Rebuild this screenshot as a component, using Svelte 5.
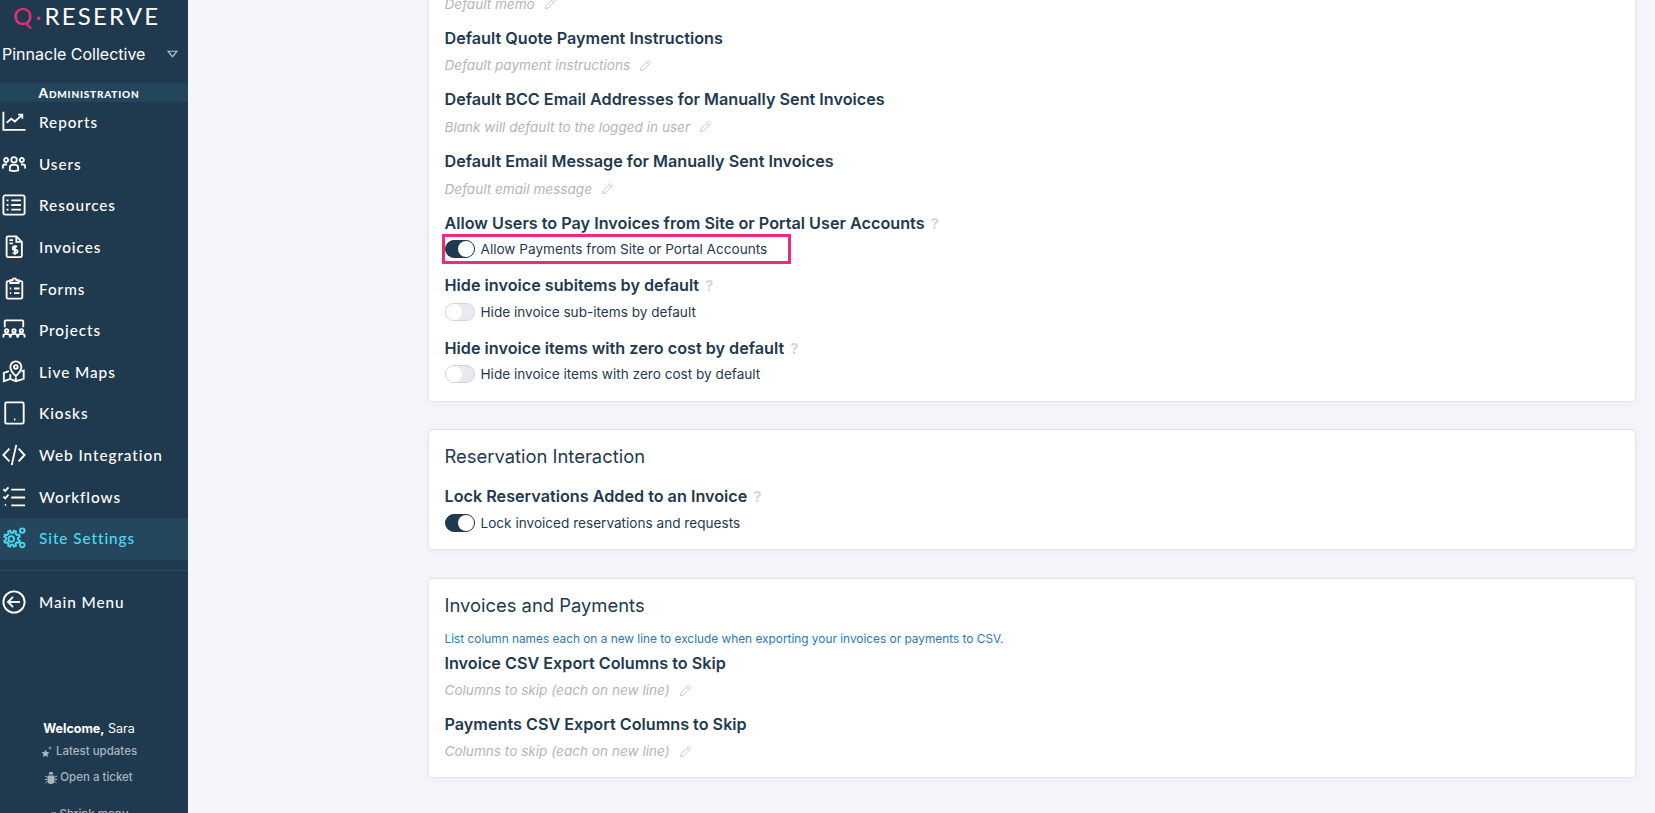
<script>
  const nav = [
    { label: "Reports", icon: "reports" },
    { label: "Users", icon: "users" },
    { label: "Resources", icon: "resources" },
    { label: "Invoices", icon: "invoices" },
    { label: "Forms", icon: "forms" },
    { label: "Projects", icon: "projects" },
    { label: "Live Maps", icon: "maps" },
    { label: "Kiosks", icon: "kiosks" },
    { label: "Web Integration", icon: "code" },
    { label: "Workflows", icon: "workflows" },
    { label: "Site Settings", icon: "settings", active: true },
  ];

  const icons = {
    reports: ["M1.500 2v19.500h24", "M5 14l5-4.500 4 3 7.500-7", "M17.500 5h4.500v4.500"],
    users: [
      "M13 5.500a3 3 0 1 1 0 6a3 3 0 1 1 0-6z",
      "M8.500 20v-3q0-3 3-3h3q3 0 3 3v3q-4.500 1.500-9 0z",
      "M4.500 6.500a2.200 2.200 0 1 1 0 4.400a2.200 2.200 0 1 1 0-4.400z",
      "M21.500 6.500a2.200 2.200 0 1 1 0 4.400a2.200 2.200 0 1 1 0-4.400z",
      "M1 18v-2.500q0-2 2-2h2.500",
      "M25 18v-2.500q0-2-2-2h-2.500",
    ],
    resources: [
      "M3.500 2.500h19a2 2 0 0 1 2 2v17a2 2 0 0 1-2 2h-19a2 2 0 0 1-2-2v-17a2 2 0 0 1 2-2z",
      "M10 8h10.500M10 13h10.500M10 18h10.500",
      "M5 8h2M5 13h2M5 18h2",
    ],
    invoices: [
      "M6.500 1.500h9l6 6v15a1.500 1.500 0 0 1-1.500 1.500h-13.500a1.500 1.500 0 0 1-1.500-1.500v-19.500a1.500 1.500 0 0 1 1.500-1.500z",
      "M15.500 1.500v6h6",
      "M8 5.500h4M8 9h4",
      "M16.500 12.500h-3a1.800 1.800 0 0 0 0 3.600h1.500a1.800 1.800 0 0 1 0 3.600h-3.500M14 11v10.500",
    ],
    forms: [
      "M9 4.500h-2.500a1.500 1.500 0 0 0-1.500 1.500v16a1.500 1.500 0 0 0 1.500 1.500h14a1.500 1.500 0 0 0 1.500-1.500v-16a1.500 1.500 0 0 0-1.500-1.500H18",
      "M9 3.500h2.500a2 2 0 0 1 4 0H18v3H9z",
      "M13 12.500h6M13 17.500h6M8.500 12.500h1.500M8.500 17.500h1.500",
    ],
    projects: [
      "M3 10V3.500a1 1 0 0 1 1-1h18a1 1 0 0 1 1 1V10",
      "M5 12a1.800 1.800 0 1 1 0 3.600a1.800 1.800 0 1 1 0-3.600z",
      "M13 12a1.800 1.800 0 1 1 0 3.600a1.800 1.800 0 1 1 0-3.600z",
      "M21 12a1.800 1.800 0 1 1 0 3.600a1.800 1.800 0 1 1 0-3.600z",
      "M1.500 21v-1.500q0-2 2-2h3q2 0 2 2V21",
      "M9.500 21v-1.500q0-2 2-2h3q2 0 2 2V21",
      "M17.500 21v-1.500q0-2 2-2h3q2 0 2 2V21",
    ],
    maps: [
      "M15 1.500a6 6 0 0 1 6 6c0 4-6 10-6 10s-6-6-6-10a6 6 0 0 1 6-6z",
      "M15 5.500a2 2 0 1 1 0 4a2 2 0 1 1 0-4z",
      "M7.500 12l-5.500 2v9l7-2.500 6 2.500 8.500-2.500v-9l-2.500 .8",
      "M9 20.500v-5M15 23v-4",
    ],
    kiosks: [
      "M5 1.500h17a1.500 1.500 0 0 1 1.500 1.500v20a1.500 1.500 0 0 1-1.500 1.500h-17a1.500 1.500 0 0 1-1.500-1.500V3a1.500 1.500 0 0 1 1.500-1.500z",
      "M13 20h1.500",
    ],
    code: ["M8 6l-6.500 7 6.500 7", "M18 6l6.500 7-6.500 7", "M15.500 2l-5 22"],
    workflows: [
      "M10 5h15M10 13.500h15M10 22h15",
      "M1.500 4.500l2 2 3.500-4",
      "M1.500 12.500l2 2 3.500-4",
      "M3 21.500h1.500",
    ],
    settings: [
      "M10 7l2 .2 1-2.200 2.200 1-.5 2.300 1.500 1.500 2.300-.5.800 2.200-2 1.200v2l2 1.200-.8 2.200-2.300-.5-1.500 1.500.5 2.300-2.200 1-1-2.200h-2.200l-1 2.200-2.200-1 .5-2.300-1.500-1.500-2.300.5-.8-2.200 2-1.200v-2l-2-1.200.8-2.200 2.300.5 1.500-1.500-.5-2.300 2.200-1 1 2.200z",
      "M10 11a3 3 0 1 1 0 6a3 3 0 1 1 0-6z",
      "M22 2.500a2.500 2.500 0 1 1 0 5a2.500 2.500 0 1 1 0-5z",
      "M22 18a2.500 2.500 0 1 1 0 5a2.500 2.500 0 1 1 0-5z",
    ],
    back: [
      "M13 1.500a11.500 11.500 0 1 1 0 23a11.500 11.500 0 1 1 0-23z",
      "M19.500 13H7",
      "M12 7.500L6.500 13l5.500 5.500",
    ],
  };
</script>

{#snippet navIcon(name)}
  <svg class="nav-icon" viewBox="0 0 26 26">
    {#each icons[name] as d}
      <path {d} />
    {/each}
  </svg>
{/snippet}

{#snippet pencil()}
  <svg class="pencil" viewBox="0 0 14 14">
    <path d="M1.500 12.500l.7-3.200 7-7a1.300 1.300 0 0 1 1.900 0l.6.6a1.300 1.300 0 0 1 0 1.900l-7 7z" />
    <path d="M8 3.500l2.500 2.500" />
  </svg>
{/snippet}

{#snippet textField(label, placeholder)}
  <div class="field">
    <div class="label">{label}</div>
    <div class="placeholder">{placeholder}{@render pencil()}</div>
  </div>
{/snippet}

{#snippet toggleField(label, text, on, marked)}
  <div class="field toggle-field">
    <div class="label">{label}<span class="help">?</span></div>
    <div class="toggle-row" class:marked>
      <span class="toggle" class:on><span class="knob"></span></span>
      <span>{text}</span>
    </div>
  </div>
{/snippet}

<div class="layout">
  <aside class="sidebar">
    <div class="logo"><span class="q">Q</span><span class="dot">·</span>RESERVE</div>
    <div class="org">
      <span>Pinnacle Collective</span>
      <svg class="caret" viewBox="0 0 12 8"><path d="M1 1h10L6 7z" /></svg>
    </div>
    <div class="section">Administration</div>
    <nav>
      {#each nav as item}
        <div class="nav-item" class:active={item.active}>
          {@render navIcon(item.icon)}
          <span>{item.label}</span>
        </div>
      {/each}
    </nav>
    <div class="divider"></div>
    <div class="nav-item">
      {@render navIcon("back")}
      <span>Main Menu</span>
    </div>
    <div class="foot">
      <div class="welcome"><b>Welcome,</b> Sara</div>
      <div class="foot-link updates">
        <svg viewBox="0 0 12 12"><path d="M4.500 3.500l1.200 2.500 2.800.3-2 1.900.5 2.800-2.500-1.300-2.500 1.300.5-2.800-2-1.900 2.800-.3z" /><path d="M9 0l.5 1.500 1.500.5-1.500.5L9 4l-.5-1.500L7 2l1.500-.5z" /></svg>
        Latest updates
      </div>
      <div class="foot-link ticket">
        <svg viewBox="0 0 12 12"><path d="M4 1.500a2 2 0 0 1 4 0v1H4zM3.500 3.500h5a1 1 0 0 1 1 1V9a3.500 3 0 0 1-7 0V4.500a1 1 0 0 1 1-1z" /><path class="legs" d="M0 4l2.500 1.500M12 4L9.500 5.500M0 7.500h2.500M12 7.500H9.500M.5 11l2-1.500M11.500 11l-2-1.500" /></svg>
        Open a ticket
      </div>
      <div class="foot-link shrink">« Shrink menu</div>
    </div>
  </aside>

  <main>
    <section class="card first">
      {@render textField("Default Memo", "Default memo")}
      {@render textField("Default Quote Payment Instructions", "Default payment instructions")}
      {@render textField("Default BCC Email Addresses for Manually Sent Invoices", "Blank will default to the logged in user")}
      {@render textField("Default Email Message for Manually Sent Invoices", "Default email message")}
      {@render toggleField("Allow Users to Pay Invoices from Site or Portal User Accounts", "Allow Payments from Site or Portal Accounts", true, true)}
      {@render toggleField("Hide invoice subitems by default", "Hide invoice sub-items by default", false, false)}
      {@render toggleField("Hide invoice items with zero cost by default", "Hide invoice items with zero cost by default", false, false)}
    </section>

    <section class="card">
      <h2>Reservation Interaction</h2>
      {@render toggleField("Lock Reservations Added to an Invoice", "Lock invoiced reservations and requests", true, false)}
    </section>

    <section class="card export">
      <h2>Invoices and Payments</h2>
      <p class="note">List column names each on a new line to exclude when exporting your invoices or payments to CSV.</p>
      {@render textField("Invoice CSV Export Columns to Skip", "Columns to skip (each on new line)")}
      {@render textField("Payments CSV Export Columns to Skip", "Columns to skip (each on new line)")}
    </section>
  </main>
</div>

<style>
  :global(body) {
    margin: 0;
    overflow: hidden;
    background: #f5f6fb;
  }

  .layout {
    display: grid;
    grid-template-columns: 188px 1fr;
    height: 813px;
    overflow: hidden;
    font-family: Inter, "Liberation Sans", sans-serif;
    color: #1f3a4f;
  }

  .sidebar {
    background: #1f3a4f;
    color: #fff;
    font-family: Lato, "Liberation Sans", sans-serif;
    height: 813px;
    overflow: hidden;
  }

  .logo {
    display: flex;
    align-items: center;
    height: 32px;
    padding: 0 0 2px 13px;
    font-size: 24px;
    line-height: 32px;
    letter-spacing: 2.200px;
    font-weight: 400;
  }

  .q {
    color: #ee2a7b;
    font-weight: 400;
    letter-spacing: 0;
  }

  .dot {
    color: #ee2a7b;
    letter-spacing: 0;
    margin: 0 3px;
  }

  .org {
    display: flex;
    align-items: center;
    justify-content: space-between;
    height: 40px;
    padding: 0 10px 0 2px;
    font-family: Inter, sans-serif;
    font-size: 16px;
  }

  .caret {
    width: 11px;
    height: 8px;
    fill: none;
    stroke: #b8c2ca;
    stroke-width: 1.3;
  }

  .section {
    margin-top: 9px;
    height: 19px;
    line-height: 19px;
    padding-right: 10px;
    background: #24465c;
    text-align: center;
    font-size: 13.700px;
    font-weight: 900;
    font-variant: small-caps;
    letter-spacing: 0.8px;
    text-transform: capitalize;
  }

  .nav-item {
    display: flex;
    align-items: center;
    box-sizing: border-box;
    height: 41.600px;
    padding: 0 0 1px 2px;
    gap: 13px;
    font-size: 15.300px;
    font-weight: 500;
    letter-spacing: 0.950px;
  }

  .nav-item.active {
    background: #24475d;
    color: #4dd9f0;
  }

  .nav-icon {
    width: 24px;
    height: 24px;
    flex: none;
    fill: none;
    stroke: currentColor;
    stroke-width: 2;
  }

  .divider {
    height: 1px;
    background: #2d5068;
    margin: 10px 0 11px;
  }

  .foot {
    margin-top: 96px;
    text-align: center;
    font-family: Inter, sans-serif;
    font-size: 12.500px;
    padding-right: 10px;
  }

  .welcome {
    height: 20px;
    line-height: 20px;
  }

  .foot-link {
    display: flex;
    align-items: center;
    justify-content: center;
    gap: 3px;
    color: #a9b4bd;
    font-size: 11.500px;
    font-weight: 500;
    height: 15px;
    line-height: 15px;
  }

  .foot-link svg {
    width: 12px;
    height: 12px;
    fill: currentColor;
  }

  .legs {
    fill: none;
    stroke: currentColor;
  }

  .updates {
    margin-top: 5px;
  }

  .ticket {
    margin-top: 11px;
  }

  .shrink {
    margin-top: 22px;
  }

  main {
    padding: 0 19px 0 240px;
    min-width: 0;
  }

  .card {
    background: #fff;
    border: 1px solid #e1e2f0;
    border-radius: 4px;
    box-shadow: 0 2px 12px rgba(60, 70, 120, 0.05);
    padding: 11px 15.500px 14.500px;
    margin-bottom: 27.500px;
  }

  .card.first {
    margin-top: -39px;
    padding-top: 0;
  }

  .card.export {
    padding-bottom: 15px;
  }

  .export .field {
    margin-bottom: 8.700px;
  }

  h2 {
    margin: 0 0 11px;
    font-size: 18.400px;
    line-height: 30px;
    font-weight: 400;
  }

  .note {
    margin: 1px 0 2px;
    font-size: 11.850px;
    line-height: 16px;
    color: #2a7ab8;
  }

  .field {
    padding-top: 2px;
    margin-bottom: 9.700px;
  }

  .field:last-child {
    margin-bottom: 0;
  }

  .label {
    font-size: 16.200px;
    font-weight: 600;
    line-height: 24px;
  }

  .help {
    margin-left: 6px;
    color: #d6d6d6;
    font-weight: 700;
    font-size: 15px;
  }

  .placeholder {
    display: flex;
    align-items: center;
    gap: 9px;
    margin-top: 5px;
    height: 21px;
    font-size: 13.600px;
    font-style: italic;
    color: #b5b5b5;
  }

  .pencil {
    width: 13px;
    height: 13px;
    fill: none;
    stroke: #c4c4c4;
    stroke-width: 1;
  }

  .toggle-row {
    position: relative;
    display: flex;
    align-items: center;
    gap: 6px;
    height: 24px;
    margin-top: 1.500px;
    font-size: 13.600px;
  }

  .toggle-field {
    margin-bottom: 10.100px;
  }

  /* review highlight drawn on top of the row */
  .marked::after {
    content: "";
    position: absolute;
    left: -3px;
    top: -3px;
    width: 349px;
    height: 30px;
    box-sizing: border-box;
    border: 3px solid #ee2a7b;
  }

  .toggle {
    display: block;
    position: relative;
    width: 30px;
    height: 18px;
    box-sizing: border-box;
    border-radius: 9px;
    background: #e8eaef;
    border: 1px solid #cfd3dc;
  }

  .toggle.on {
    background: #1f3a4f;
    border-color: #1f3a4f;
  }

  .knob {
    position: absolute;
    left: 0;
    top: 0;
    width: 16px;
    height: 16px;
    border-radius: 50%;
    background: #fff;
  }

  .toggle.on .knob {
    left: 12px;
  }
</style>
